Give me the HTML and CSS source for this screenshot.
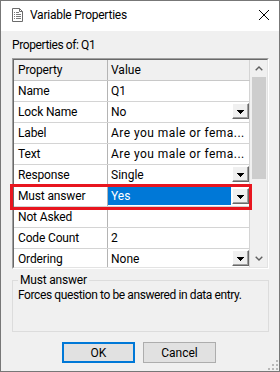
FILE: index.html
```html
<!DOCTYPE html>
<html>
<head>
<meta charset="utf-8">
<link rel="stylesheet" href="styles.css">
</head>
<body>
<div class="window">
  <div class="titlebar">
    <svg class="appicon" width="11" height="14" viewBox="0 0 11 14">
      <path d="M0.5 0.5H7.5L10.5 3.5V13.5H0.5Z" fill="#fff" stroke="#6b6b6b"/>
      <path d="M7.5 0.5V3.5H10.5" fill="none" stroke="#6b6b6b"/>
      <path d="M2 4.5h1M4 4.5h3M2 6.5h1M4 6.5h5M2 8.5h1M4 8.5h5M2 10.5h1M4 10.5h5" stroke="#7a7a7a"/>
    </svg>
    <span class="title">Variable Properties</span>
    <svg class="close" width="10" height="10" viewBox="0 0 10 10">
      <path d="M0 0L10 10M10 0L0 10" stroke="#000" stroke-width="1"/>
    </svg>
  </div>
  <div class="content">
    <div class="caption">Properties of: Q1</div>
    <div class="pgrid">
      <div class="pgrid-inner">
        <div class="rows">
          <div class="row head"><div class="c1">Property</div><div class="c2">Value</div></div>
          <div class="row"><div class="c1">Name</div><div class="c2">Q1</div></div>
          <div class="row"><div class="c1">Lock Name</div><div class="c2 combo"><span class="val">No</span><span class="dd"><svg width="7" height="4" viewBox="0 0 7 4"><path d="M0 0h7v1h-1v1h-1v1h-1v1h-1v-1h-1v-1h-1v-1h-1z" fill="#000"/></svg></span></div></div>
          <div class="row"><div class="c1">Label</div><div class="c2 long">Are you male or fema...</div></div>
          <div class="row"><div class="c1">Text</div><div class="c2 long">Are you male or fema...</div></div>
          <div class="row"><div class="c1">Response</div><div class="c2 combo"><span class="val">Single</span><span class="dd"><svg width="7" height="4" viewBox="0 0 7 4"><path d="M0 0h7v1h-1v1h-1v1h-1v1h-1v-1h-1v-1h-1v-1h-1z" fill="#000"/></svg></span></div></div>
          <div class="row"><div class="c1">Must answer</div><div class="c2 combo sel"><span class="val">Yes</span><span class="dd"><svg width="7" height="4" viewBox="0 0 7 4"><path d="M0 0h7v1h-1v1h-1v1h-1v1h-1v-1h-1v-1h-1v-1h-1z" fill="#000"/></svg></span></div></div>
          <div class="row"><div class="c1">Not Asked</div><div class="c2"></div></div>
          <div class="row"><div class="c1">Code Count</div><div class="c2">2</div></div>
          <div class="row"><div class="c1">Ordering</div><div class="c2 combo"><span class="val">None</span><span class="dd"><svg width="7" height="4" viewBox="0 0 7 4"><path d="M0 0h7v1h-1v1h-1v1h-1v1h-1v-1h-1v-1h-1v-1h-1z" fill="#000"/></svg></span></div></div>
        </div>
        <div class="vscroll">
          <div class="arrow"><svg width="8" height="5" viewBox="0 0 8 5"><path d="M0.7 4.3L4 1L7.3 4.3" fill="none" stroke="#606060" stroke-width="1.4"/></svg></div>
          <div class="track"><div class="thumb"></div></div>
          <div class="arrow"><svg width="8" height="5" viewBox="0 0 8 5"><path d="M0.7 0.7L4 4L7.3 0.7" fill="none" stroke="#606060" stroke-width="1.4"/></svg></div>
        </div>
      </div>
    </div>
    <div class="desc">
      <div class="legend-row"><span class="legend">Must answer</span></div>
      <p class="desc-text">Forces question to be answered in data entry.</p>
    </div>
    <div class="buttons">
      <button class="btn default">OK</button>
      <button class="btn">Cancel</button>
    </div>
  </div>
  <div class="highlight"></div>
  <svg class="grip" width="10" height="10" viewBox="0 0 10 10">
    <path d="M8 0h2v2h-2zM4 4h2v2h-2zM8 4h2v2h-2zM0 8h2v2h-2zM4 8h2v2h-2zM8 8h2v2h-2z" fill="#b8b8b8"/>
  </svg>
</div>
</body>
</html>
```

FILE: styles.css
```css
* { box-sizing: border-box; }
html, body { margin: 0; padding: 0; }
body {
  width: 280px;
  height: 372px;
  font-family: Roboto, "Noto Sans", sans-serif;
  font-size: 12px;
  color: #000;
  background: #fff;
  overflow: hidden;
}
.window {
  position: relative;
  width: 280px;
  height: 372px;
  border: 1px solid #777;
  background: #f0f0f0;
  display: flex;
  flex-direction: column;
}
.titlebar {
  height: 30px;
  flex: none;
  background: #fff;
  display: flex;
  align-items: center;
  padding-left: 11px;
}
.appicon { margin-top: -2px; flex: none; }
.title { margin-left: 7px; line-height: 16px; margin-top: -2px; letter-spacing: -0.25px; }
.close { margin-left: auto; margin-right: 10px; margin-top: -2px; }

.content { flex: 1; padding: 6px 0 0 11px; }
.caption { line-height: 16px; height: 16px; letter-spacing: -0.4px; }

.pgrid {
  width: 257px;
  height: 211px;
  margin-top: 5px;
  display: flex;
  border: 1px solid;
  border-color: #a0a0a0 #fff #fff #a0a0a0;
}
.pgrid-inner {
  flex: 1;
  display: flex;
  overflow: hidden;
  background: #fff;
  border: 1px solid;
  border-color: #696969 #e3e3e3 #e3e3e3 #696969;
}
.rows { width: 236px; flex: none; background: #fff; }
.row {
  display: flex;
  height: 21px;
  border-bottom: 1px solid #d4d4d4;
}
.row.head { background: #f0f0f0; border-bottom-color: #c8c8c8; }
.c1 {
  width: 94px;
  flex: none;
  padding-left: 4px;
  line-height: 20px;
  border-right: 1px solid #b4b4b4;
  white-space: nowrap;
  letter-spacing: -0.15px;
}
.c2 {
  flex: 1;
  padding-left: 3px;
  line-height: 20px;
  border-right: 1px solid #d4d4d4;
  white-space: nowrap;
  overflow: hidden;
}
.c2.long { letter-spacing: 0.45px; }
.c2.combo { display: flex; padding-left: 0; }
.combo .val { flex: 1; padding-left: 3px; }
.dd {
  width: 17px;
  height: 16px;
  margin-top: 1px;
  flex: none;
  display: flex;
  align-items: center;
  justify-content: center;
  background: #f0f0f0;
  border: 1px solid;
  border-color: #fff #696969 #696969 #fff;
  box-shadow: inset -1px -1px 0 #a0a0a0;
}
.dd svg { display: block; margin-top: 1px; }
.sel .val {
  background: #0078d7;
  color: #fff;
  height: 18px;
  line-height: 18px;
  margin: 1px 1px 0 0;
}
.sel .dd { margin-top: 2px; }

.vscroll {
  width: 17px;
  flex: none;
  background: #f0f0f0;
  display: flex;
  flex-direction: column;
}
.arrow {
  height: 17px;
  flex: none;
  display: flex;
  align-items: center;
  justify-content: center;
}
.arrow svg { display: block; }
.track { flex: 1; }
.thumb { height: 102px; margin: 0 1px 0 2px; background: #cdcdcd; }

.desc {
  width: 257px;
  height: 52px;
  margin-top: 11px;
  border: 1px solid #dcdcdc;
  padding: 0 5px;
}
.legend-row { height: 7px; }
.legend {
  position: relative;
  top: -8px;
  display: inline-block;
  padding: 0 2px;
  line-height: 14px;
  background: #f0f0f0;
  letter-spacing: -0.2px;
}
.desc-text { margin: 0; line-height: 14px; letter-spacing: -0.4px; }

.buttons {
  display: flex;
  gap: 8px;
  margin-top: 10px;
  padding-left: 50px;
}
.btn {
  width: 73px;
  height: 21px;
  padding: 0;
  font: inherit;
  color: #000;
  background: #e1e1e1;
  border: 1px solid #adadad;
}
.btn.default { border: 2px solid #0078d7; }

.highlight {
  position: absolute;
  left: 9px;
  top: 183px;
  width: 242px;
  height: 26px;
  border: 3px solid #e8161f;
}
.grip { position: absolute; right: 1px; bottom: 1px; }
```
